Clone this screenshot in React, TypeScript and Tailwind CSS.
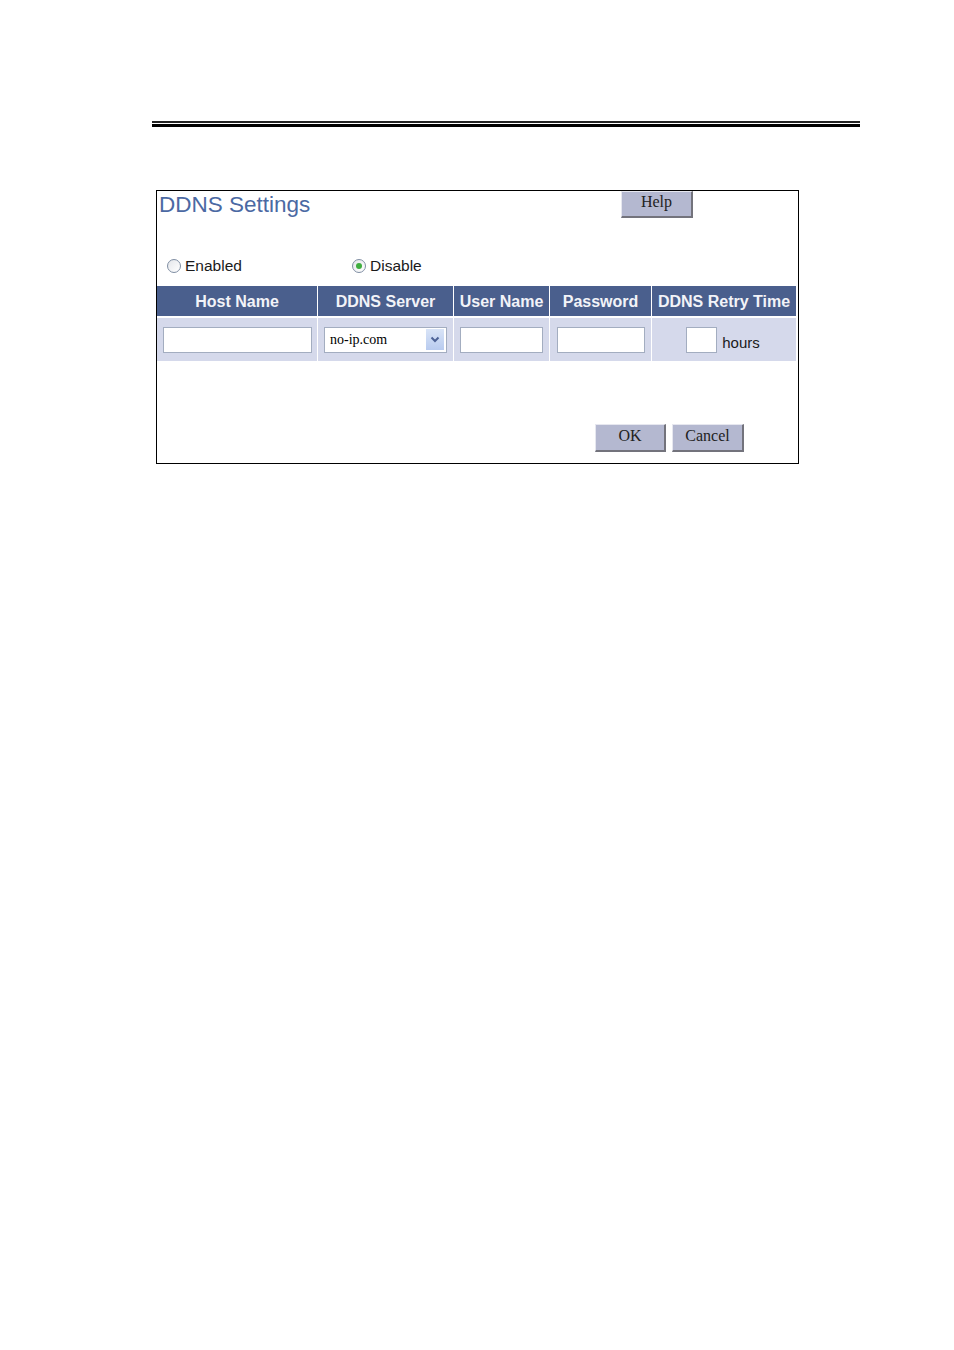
import React from "react";

const sans = { fontFamily: '"Liberation Sans", Arial, sans-serif' };
const serif = { fontFamily: '"Liberation Serif", "Times New Roman", serif' };

function Radio({ label, checked }: { label: string; checked?: boolean }) {
  return (
    <label className="flex items-center gap-[4px] text-[15.5px] text-[#1a1a1a]">
      <span className="flex h-[14px] w-[14px] items-center justify-center rounded-full border border-[#7f8ea3] bg-gradient-to-br from-[#e4e6ea] to-white">
        {checked && <span className="h-[6px] w-[6px] rounded-full bg-[#3fae3f]" />}
      </span>
      {label}
    </label>
  );
}

function GrayButton({ label, className = "" }: { label: string; className?: string }) {
  return (
    <button
      className={`flex items-center justify-center border-t border-l border-t-[#e6e7ef] border-l-[#e6e7ef] border-r-2 border-b-2 border-r-[#73737c] border-b-[#73737c] bg-[#b4b8d0] text-[16px] text-[#222] ${className}`}
      style={serif}
    >
      {label}
    </button>
  );
}

function TextBox({ w }: { w: string }) {
  return <div className={`${w} h-[26px] border border-[#a3adc0] bg-white`} />;
}

const headers = ["Host Name", "DDNS Server", "User Name", "Password", "DDNS Retry Time"];

export default function App() {
  return (
    <div className="min-h-[1350px] w-[954px] bg-white pt-[121px]" style={sans}>
      {/* page rule */}
      <div className="ml-[152px] w-[708px]">
        <div className="h-[2px] bg-[#222]" />
        <div className="h-px bg-white" />
        <div className="h-[3px] bg-black" />
      </div>

      <div className="ml-[156px] mt-[63px] h-[274px] w-[643px] border border-black">
        <div className="flex items-start">
          <h1 className="pl-[2px] text-[22.5px] leading-[28px] text-[#4b69a3]">DDNS Settings</h1>
          <GrayButton label="Help" className="ml-auto mr-[105px] h-[27px] w-[72px] pb-[4px]" />
        </div>

        <div className="mt-[37px] flex h-[20px] items-center pl-[10px]">
          <div className="w-[185px]">
            <Radio label="Enabled" />
          </div>
          <Radio label="Disable" checked />
        </div>

        <div className="mt-[10px] grid w-[639px] grid-cols-[160px_135px_95px_101px_144px] gap-x-px gap-y-[2px]">
          {headers.map((h) => (
            <div
              key={h}
              className="flex h-[30px] items-center justify-center bg-[#4a5f8d] pt-[2px] text-[16px] font-bold text-[#f2f3f8]"
            >
              {h}
            </div>
          ))}

          <div className="flex h-[43px] items-center justify-center bg-[#d5d9eb]">
            <TextBox w="w-[149px]" />
          </div>
          <div className="flex h-[43px] items-center justify-center bg-[#d5d9eb]">
            <div className="flex h-[26px] w-[123px] items-center border border-[#a3adc0] bg-white pl-[5px] pr-[2px]">
              <span className="flex-1 text-[14px] text-black" style={serif}>
                no-ip.com
              </span>
              <span className="flex h-[21px] w-[18px] items-center justify-center bg-gradient-to-b from-[#d9e4f7] to-[#b8cbef]">
                <svg width="10" height="7" viewBox="0 0 10 7">
                  <path d="M1.5 1.5 L5 5 L8.5 1.5" fill="none" stroke="#4d6296" strokeWidth="2" />
                </svg>
              </span>
            </div>
          </div>
          <div className="flex h-[43px] items-center justify-center bg-[#d5d9eb]">
            <TextBox w="w-[83px]" />
          </div>
          <div className="flex h-[43px] items-center justify-center bg-[#d5d9eb]">
            <TextBox w="w-[88px]" />
          </div>
          <div className="flex h-[43px] items-center justify-center gap-[5px] bg-[#d5d9eb] pr-[2px]">
            <TextBox w="w-[31px]" />
            <span className="mt-[8px] text-[15px] text-[#1a1a1a]">hours</span>
          </div>
        </div>

        <div className="mt-[63px] flex justify-end gap-[6px] pr-[54px]">
          <GrayButton label="OK" className="h-[28px] w-[71px] pb-[3px]" />
          <GrayButton label="Cancel" className="h-[28px] w-[72px] pb-[3px]" />
        </div>
      </div>
    </div>
  );
}
